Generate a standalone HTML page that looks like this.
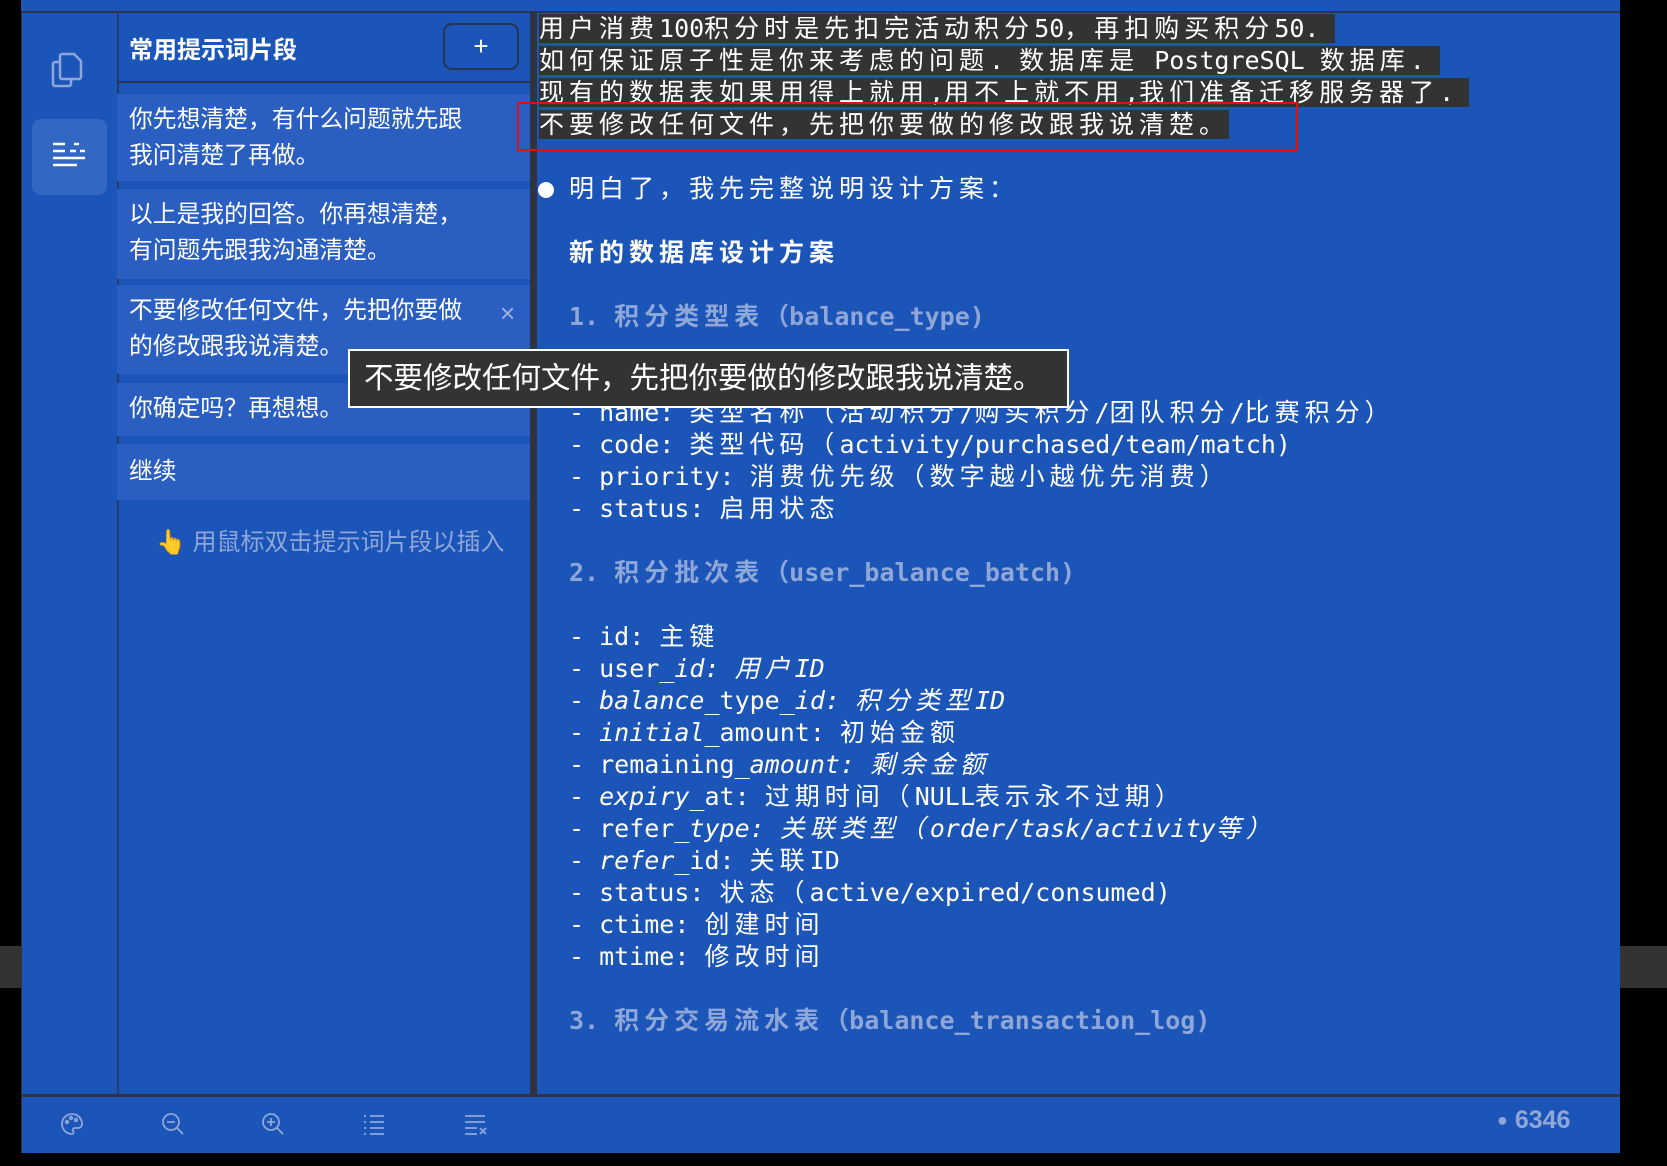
<!DOCTYPE html>
<html><head><meta charset="utf-8"><style>
*{margin:0;padding:0;box-sizing:border-box}
body{width:1667px;height:1166px;background:#000;position:relative;overflow:hidden;font-family:"Liberation Sans","Noto Sans CJK SC",sans-serif;color:#fff}
.abs{position:absolute}
.app{position:absolute;left:21px;top:0;width:1599px;height:1153px;background:#1c55b8}
.mono{position:absolute;left:539px;font-family:"DejaVu Sans Mono","Noto Sans CJK SC",monospace;font-size:25px;line-height:32px;white-space:pre;color:#fff}
.c{letter-spacing:5px}
.hl{background:#333}
.g{color:#8fa6d8;font-weight:bold}
.item{position:absolute;left:117px;width:413px;background:#2a5ec0;font-size:23.8px;line-height:36px;padding-left:12px}
</style></head><body>
<div class="abs" style="left:0;top:946px;width:21px;height:42px;background:#333"></div>
<div class="abs" style="left:1620px;top:946px;width:47px;height:42px;background:#333"></div>
<div class="app">
 <div class="abs" style="left:0;top:11px;width:1599px;height:2px;background:#2b3450"></div>
 <div class="abs" style="left:0;top:12px;width:1px;height:1141px;background:#333"></div>
 <div class="abs" style="left:96px;top:12px;width:2px;height:1083px;background:#2b3a66"></div>
 <div class="abs" style="left:509px;top:12px;width:7px;height:1083px;background:#2f3440"></div>
 <div class="abs" style="left:0;top:1094px;width:1599px;height:3px;background:#2f3440"></div>
</div>
<!-- left icons -->
<svg class="abs" style="left:50px;top:50px" width="36" height="40" viewBox="0 0 36 40" fill="none" stroke="#8fa6d8" stroke-width="2.5"><path d="M12 4h12l7 7v16a2 2 0 0 1-2 2H12a2 2 0 0 1-2-2V6a2 2 0 0 1 2-2z"/><path d="M10 12H5a2 2 0 0 0-2 2v20a2 2 0 0 0 2 2h14a2 2 0 0 0 2-2v-5"/></svg>
<div class="abs" style="left:32px;top:119px;width:75px;height:76px;background:#3267c4;border-radius:9px"></div>
<svg class="abs" style="left:52px;top:142px" width="34" height="30" viewBox="0 0 34 30" stroke="#fff" stroke-width="2.5"><path d="M1 2h12M1 9h12M1 16h32M1 23h24M18 9h6M28 9h5M22 2h5"/></svg>
<!-- snippet panel -->
<div class="abs" style="left:129px;top:30px;font-size:24px;font-weight:bold">常用提示词片段</div>
<div class="abs" style="left:443px;top:23px;width:76px;height:47px;border:2px solid #2a3350;border-radius:9px;text-align:center;line-height:42px;font-size:26px">+</div>
<div class="abs" style="left:117px;top:81px;width:413px;height:2px;background:#2a3350"></div>
<div class="item" style="top:94px;height:87px;padding-top:8px">你先想清楚，有什么问题就先跟<br>我问清楚了再做。</div>
<div class="item" style="top:189px;height:90px;padding-top:8px">以上是我的回答。你再想清楚，<br>有问题先跟我沟通清楚。</div>
<div class="item" style="top:285px;height:89px;padding-top:8px">不要修改任何文件，先把你要做<br>的修改跟我说清楚。</div>
<div class="abs" style="left:500px;top:298px;font-size:26px;color:#9fb2dc">×</div>
<div class="item" style="top:383px;height:53px;padding-top:8px">你确定吗？再想想。</div>
<div class="item" style="top:444px;height:56px;padding-top:10px">继续</div>
<div class="abs" style="left:156px;top:522px;font-size:24px;color:#8fa6d8"><span style="color:#e0a040">👆</span> 用鼠标双击提示词片段以插入</div>
<!-- main text -->
<div class="mono" style="top:13px"><span class="hl"><span class="c">用户消费</span>100<span class="c">积分时是先扣完活动积分</span>50<span class="c">，再扣购买积分</span>50. </span>
<span class="hl"><span class="c">如何保证原子性是你来考虑的问题</span>. <span class="c">数据库是</span> PostgreSQL <span class="c">数据库</span>. </span>
<span class="hl"><span class="c">现有的数据表如果用得上就用</span>,<span class="c">用不上就不用</span>,<span class="c">我们准备迁移服务器了</span>. </span>
<span class="hl"><span class="c">不要修改任何文件，先把你要做的修改跟我说清楚。</span></span>
</div>
<div class="abs" style="left:517px;top:102px;width:781px;height:49px;border:2px solid #e01010"></div>
<div class="abs" style="left:538px;top:182px;width:16px;height:16px;border-radius:50%;background:#fff"></div>
<div class="mono" style="top:173px;left:569px"><span class="c">明白了，我先完整说明设计方案：</span>

<b class="c">新的数据库设计方案</b>

<span class="g">1. <span class="c">积分类型表</span>（balance_type)</span>

- id: <span class="c">主键</span>
- name: <span class="c">类型名称（活动积分</span>/<span class="c">购买积分</span>/<span class="c">团队积分</span>/<span class="c">比赛积分）</span>
- code: <span class="c">类型代码（</span>activity/purchased/team/match)
- priority: <span class="c">消费优先级（数字越小越优先消费）</span>
- status: <span class="c">启用状态</span>

<span class="g">2. <span class="c">积分批次表</span>（user_balance_batch)</span>

- id: <span class="c">主键</span>
- user<i>_id: <span class="c">用户</span>ID</i>
- <i>balance</i>_type<i>_id: <span class="c">积分类型</span>ID</i>
- <i>initial</i>_amount: <span class="c">初始金额</span>
- remaining<i>_amount: <span class="c">剩余金额</span></i>
- <i>expiry</i>_at: <span class="c">过期时间（</span>NULL<span class="c">表示永不过期）</span>
- refer<i>_type: <span class="c">关联类型（</span>order/task/activity<span class="c">等）</span></i>
- <i>refer</i>_id: <span class="c">关联</span>ID
- status: <span class="c">状态（</span>active/expired/consumed)
- ctime: <span class="c">创建时间</span>
- mtime: <span class="c">修改时间</span>

<span class="g">3. <span class="c">积分交易流水表</span>（balance_transaction_log)</span></div>
<!-- tooltip -->
<div class="abs" style="left:348px;top:349px;width:721px;height:59px;background:#333;border:2px solid #fff;font-size:29.5px;line-height:55px;padding-left:14px;white-space:nowrap">不要修改任何文件，先把你要做的修改跟我说清楚。</div>
<!-- bottom bar icons -->
<svg class="abs" style="left:60px;top:1112px" width="440" height="26" viewBox="0 0 440 26" fill="none" stroke="#8fa6d8" stroke-width="1.8">
 <path d="M12 2a10 10 0 1 0 0 20c2 0 2-2 1-3s0-3 2-3h3a4 4 0 0 0 4-4A10 10 0 0 0 12 2z"/><circle cx="7" cy="10" r="1.3"/><circle cx="11" cy="6" r="1.3"/><circle cx="16" cy="8" r="1.3"/>
 <circle cx="111" cy="10" r="8"/><path d="M107 10h8M117 16l6 6"/>
 <circle cx="211" cy="10" r="8"/><path d="M207 10h8M211 6v8M217 16l6 6"/>
 <path d="M304 4h2M304 10h2M304 16h2M304 22h2M310 4h14M310 10h14M310 16h14M310 22h14"/>
 <path d="M405 4h20M405 10h20M405 16h12M405 22h12M420 16l6 6M426 16l-6 6"/>
</svg>
<div class="abs" style="left:1497px;top:1106px;font-size:25px;font-weight:bold;color:#8fa6d8"><span style="font-size:18px;vertical-align:2px">●</span> 6346</div>
</body></html>
